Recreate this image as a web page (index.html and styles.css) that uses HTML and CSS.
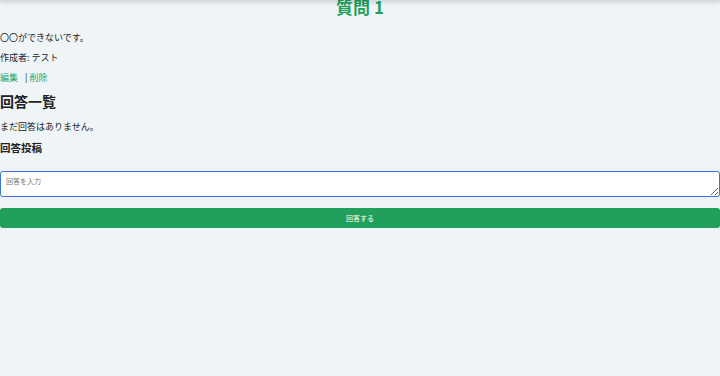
FILE: index.html
```html
<!DOCTYPE html>
<html lang="ja">
    <head>
        <meta charset="UTF-8" />
        <title>質問 1</title>
        <link rel="stylesheet" href="styles.css">
    </head>
    <body>
        <div class="top-shadow"></div>

        <main class="question">
            <h1 class="question-title">質問 1</h1>
            <p>〇〇ができないです。</p>
            <p>作成者: テスト</p>
            <p class="actions">
                <a href="#">編集</a>
                <span class="sep">|</span><a href="#">削除</a>
            </p>

            <h2>回答一覧</h2>
            <p>まだ回答はありません。</p>

            <h3>回答投稿</h3>
            <form class="answer-form">
                <textarea placeholder="回答を入力"></textarea>
                <button type="submit">回答する</button>
            </form>
        </main>
    </body>
</html>
```

FILE: styles.css
```css
body {
  margin: 0;
  background-color: #eff4f7;
  font-family: "Noto Sans CJK JP", "Noto Sans", sans-serif;
  font-size: 9px;
  color: #222;
}

.top-shadow {
  position: fixed;
  top: 0;
  left: 0;
  right: 0;
  height: 0;
  box-shadow: 0 0 5px 1px rgba(0, 0, 0, 0.35);
  z-index: 5;
}

.question {
  margin-top: -4px;
}

.question-title {
  margin: 0 0 13px;
  text-align: center;
  color: #1fa05a;
  font-size: 17px;
  font-weight: bold;
  line-height: 22px;
}

p {
  margin: 0 0 7px;
  line-height: 13px;
}

.actions a {
  color: #2aa565;
  text-decoration: none;
}

.actions .sep {
  margin-left: 5px;
  margin-right: 2px;
}

h2 {
  margin: 8px 0 10px;
  font-size: 14px;
  line-height: 18px;
}

h3 {
  margin: 8px 0 16px;
  font-size: 10.5px;
  line-height: 14px;
}

.answer-form textarea {
  display: block;
  box-sizing: border-box;
  width: 100%;
  height: 26px;
  margin: 0 0 11px;
  padding: 4px 5px;
  border: 1.5px solid #3c78d8;
  border-radius: 3px;
  background: #fff;
  font-family: inherit;
  font-size: 7px;
  outline: none;
}

.answer-form textarea::placeholder {
  color: #777;
}

.answer-form button {
  display: block;
  width: 100%;
  height: 20px;
  border: none;
  border-radius: 3px;
  background-color: #21a05b;
  color: #fff;
  font-family: inherit;
  font-size: 7px;
}
```
